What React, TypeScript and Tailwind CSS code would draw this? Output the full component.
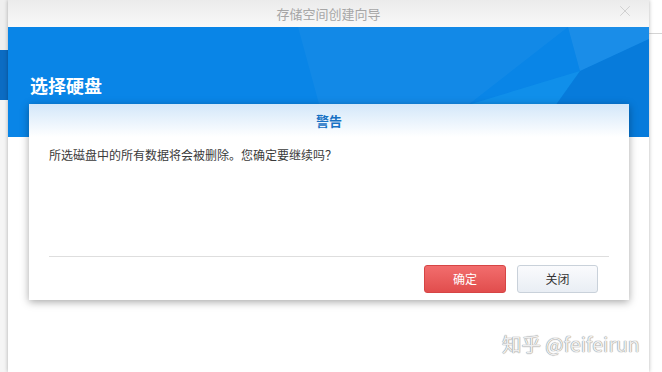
import { X } from "lucide-react";

const font = "font-['Noto_Sans_CJK_SC','Noto_Sans',sans-serif]";

function HeaderFacets() {
  return (
    <svg
      aria-hidden
      className="absolute inset-0 h-full w-full"
      viewBox="0 0 641 110"
      preserveAspectRatio="none"
    >
      <polygon points="290,0 560,0 460,78 380,110 320,110" fill="#ffffff" opacity="0.04" />
      <polygon points="560,0 641,0 641,12 572,44" fill="#ffffff" opacity="0.07" />
      <polygon points="460,78 572,44 525,110 380,110" fill="#2ab4f6" opacity="0.22" />
      <polygon points="572,44 641,12 641,110 525,110" fill="#0560b6" opacity="0.25" />
    </svg>
  );
}

function WarningDialog() {
  return (
    <div className="absolute left-[21px] top-[104px] flex h-[196px] w-[600px] flex-col bg-white shadow-[0_2px_8px_rgba(0,0,0,0.35)]">
      <div className="flex h-[33px] items-center justify-center bg-gradient-to-b from-[#d3e7f9] to-white">
        <span className="text-[13px] font-bold text-[#1771c4]">警告</span>
      </div>
      <div className="flex-1 px-[20px] pt-[9px]">
        <p className="text-[12px] leading-[18px] text-[#3a3a3a]">
          所选磁盘中的所有数据将会被删除。您确定要继续吗？
        </p>
      </div>
      <div className="mx-[20px] h-px bg-[#dedede]" />
      <div className="flex justify-end gap-[11px] pb-[7px] pr-[31px] pt-[8px]">
        <button className="h-[28px] w-[82px] rounded-[3px] border border-[#d64545] bg-gradient-to-b from-[#f26d6d] to-[#e14d4d] text-[12px] text-white">
          确定
        </button>
        <button className="h-[28px] w-[81px] rounded-[3px] border border-[#c9d1da] bg-gradient-to-b from-[#fafbfd] to-[#e9eef4] text-[12px] text-[#333]">
          关闭
        </button>
      </div>
    </div>
  );
}

export default function App() {
  return (
    <div className={`relative flex h-[372px] w-[662px] overflow-hidden bg-white ${font}`}>
      <div className="flex w-[8px] flex-none flex-col">
        <div className="h-[50px] bg-[#efefef]" />
        <div className="h-[50px] bg-[#0c6cc3]" />
        <div className="flex-1 bg-[#f5f5f5]" />
      </div>

      <div className="relative z-10 flex w-[641px] flex-none flex-col bg-white shadow-[0_0_4px_rgba(0,0,0,0.3)]">
        <div className="relative flex h-[27px] items-center justify-center bg-gradient-to-b from-[#ebebeb] to-[#f9f9f9]">
          <span className="text-[13px] text-[#a6a6a6]">存储空间创建向导</span>
          <X className="absolute right-[15px] top-[2px] size-[18px] text-[#cacaca]" strokeWidth={1.1} />
        </div>
        <div className="relative h-[110px] bg-[#0985e7]">
          <HeaderFacets />
          <h1 className="relative pl-[22px] pt-[46px] text-[18px] font-bold leading-[24px] text-white">
            选择硬盘
          </h1>
        </div>
        <div className="flex-1 bg-white" />
        <WarningDialog />
      </div>

      <div className="flex-1 bg-white">
        <div className="mt-[33px] h-px bg-[#d4d4d4]" />
      </div>

      <div className="absolute left-[502px] top-[331px] z-20 text-[19.5px] leading-[26px] text-[#eeeeee] [text-shadow:0_0_1px_#8a8a8a,0_0_1px_#8a8a8a]">
        知乎 @feifeirun
      </div>
    </div>
  );
}
